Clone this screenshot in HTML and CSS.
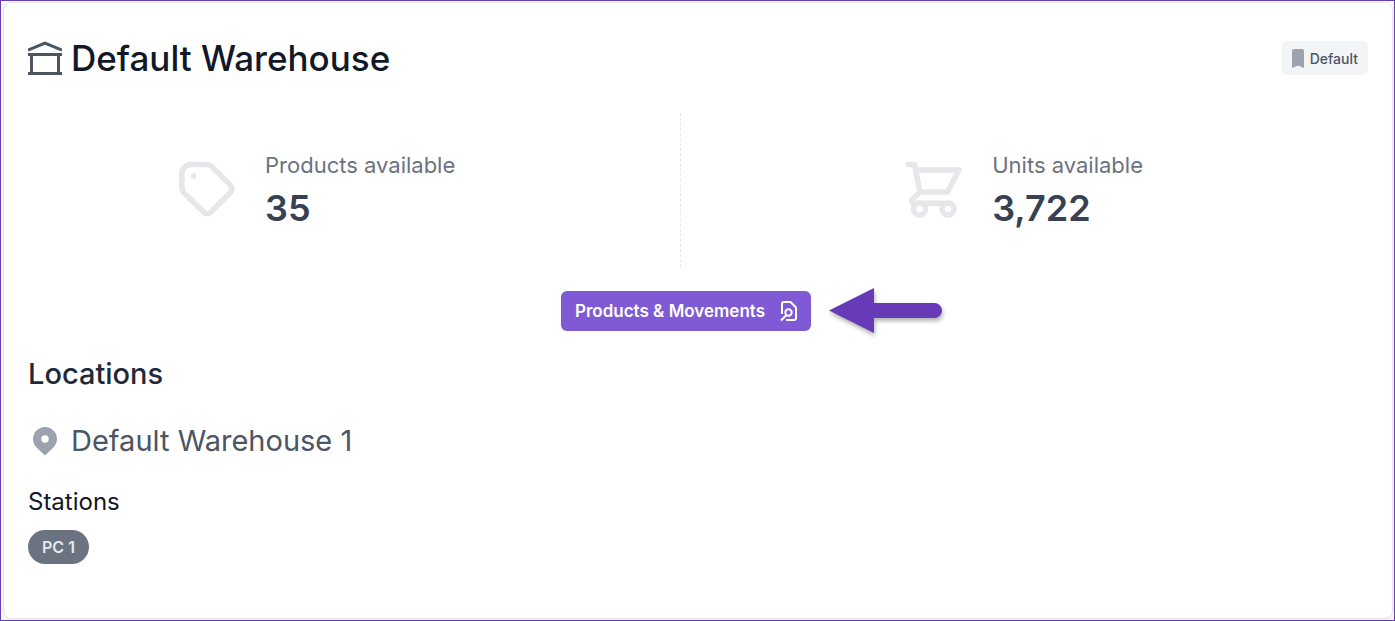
FILE: index.html
```html
<!DOCTYPE html>
<html lang="en">
  <head>
    <meta charset="UTF-8" />
    <meta name="viewport" content="width=device-width, initial-scale=1.0" />
    <title>Default Warehouse</title>
    <link rel="stylesheet" href="styles.css">
  </head>
  <body>
    <main class="card">
      <header class="card-header">
        <h1 class="title">
          <svg class="title-icon" viewBox="0 0 34 34" fill="none" stroke="currentColor" stroke-width="3">
            <path d="M0 9 17 2l17 7M0 13.5h34M0 32.5h34M3.5 13.5v19M30.5 13.5v19" />
          </svg>
          Default Warehouse
        </h1>
        <span class="badge">
          <svg class="badge-icon" viewBox="0 0 12 19" fill="currentColor">
            <path d="M0 2a2 2 0 0 1 2-2h8a2 2 0 0 1 2 2v17l-6-2.600L0 19z" />
          </svg>
          Default
        </span>
      </header>

      <section class="stats">
        <div class="stat">
          <svg class="stat-icon" viewBox="0 0 58 58" fill="none" stroke="currentColor" stroke-width="5.500" stroke-linejoin="round">
            <path d="M13 4.500h15.500a8 8 0 0 1 5.600 2.300l18.500 18.600a5 5 0 0 1 0 7.100L32.800 52.300a5 5 0 0 1-7.100 0L6.200 33a8 8 0 0 1-2.300-5.600V13.500a9 9 0 0 1 9.100-9z" />
            <circle cx="15.500" cy="16" r="2.700" fill="currentColor" stroke="none" />
          </svg>
          <div>
            <div class="stat-label">Products available</div>
            <div class="stat-value">35</div>
          </div>
        </div>
        <div class="divider"></div>
        <div class="stat">
          <svg class="stat-icon" viewBox="0 0 58 58" fill="none" stroke="currentColor" stroke-width="5.500" stroke-linecap="round" stroke-linejoin="round">
            <path d="M3.500 4.500h6L15 32M11 10h43L42.500 32H15l-7 6.500c-2 2-1 4.700 2 4.700h35" />
            <circle cx="14.500" cy="49" r="6" />
            <circle cx="43" cy="49" r="6" />
          </svg>
          <div>
            <div class="stat-label">Units available</div>
            <div class="stat-value">3,722</div>
          </div>
        </div>
      </section>

      <div class="actions">
        <button class="btn" type="button">
          Products &amp; Movements
          <svg class="btn-icon" viewBox="0 0 20 22" fill="none" stroke="currentColor" stroke-width="2" stroke-linejoin="round">
            <path d="M3 14V4a2 2 0 0 1 2-2h6.500L17 7.500V18a2 2 0 0 1-2 2H7M2 20.500l5-5" />
            <circle cx="9.500" cy="12.500" r="3.200" />
          </svg>
        </button>
        <svg class="pointer" viewBox="0 0 114 46" fill="currentColor">
          <path d="M0 22.500 45 0v15h60.500a7.500 7.500 0 0 1 0 15H45v15z" />
        </svg>
      </div>

      <section class="locations">
        <h2 class="section-title">Locations</h2>
        <h3 class="location">
          <svg class="location-icon" viewBox="0 0 24 29" fill="currentColor">
            <path fill-rule="evenodd" d="M12 0a12 12 0 0 0-12 12c0 3.500 1.500 6.300 3.800 8.700L12 28.500l8.200-7.800C22.500 18.300 24 15.500 24 12A12 12 0 0 0 12 0zm0 8.300a3.700 3.700 0 1 1 0 7.400 3.700 3.700 0 0 1 0-7.400z" />
          </svg>
          Default Warehouse 1
        </h3>
        <h4 class="stations-title">Stations</h4>
        <span class="station">PC 1</span>
      </section>
    </main>
  </body>
</html>
```

FILE: styles.css
```css
* {
  box-sizing: border-box;
}

body {
  margin: 0;
  min-height: 100vh;
  padding: 1px 1px 1px 2px;
  display: flex;
  background: #fff;
  border: 1px solid #673ab7;
  font-family: "Inter", sans-serif;
  color: #111827;
}

h1,
h2,
h3,
h4 {
  margin: 0;
}

.card {
  flex: 1;
  padding: 31px 24px 24px;
  background: #fff;
  border: 1px solid #e5e7eb;
  border-radius: 8px;
  box-shadow: 0 1px 3px rgba(0, 0, 0, 0.1);
}

.card-header {
  display: flex;
  align-items: center;
  justify-content: space-between;
}

.title {
  display: flex;
  align-items: center;
  gap: 9px;
  font-size: 35px;
  font-weight: 500;
  line-height: 48px;
}

.title-icon {
  width: 34px;
  height: 34px;
  color: #4b5563;
}

.badge {
  display: flex;
  align-items: center;
  gap: 6px;
  height: 34px;
  padding: 0 10px;
  border-radius: 5px;
  background: #f3f4f6;
  color: #4b5563;
  font-size: 14px;
  font-weight: 500;
}

.badge-icon {
  width: 12px;
  height: 19px;
  color: #9ca3af;
}

.stats {
  display: flex;
  justify-content: space-between;
  margin-top: 31px;
  padding: 0 225px 0 150px;
}

.stat {
  display: flex;
  align-items: center;
  gap: 29px;
  padding-bottom: 2px;
}

.stat-icon {
  width: 58px;
  height: 58px;
  color: #e5e7eb;
}

.stat-label {
  color: #6b7280;
  font-size: 22px;
  line-height: 38px;
}

.stat-value {
  color: #374151;
  font-size: 36px;
  font-weight: 600;
  line-height: 48px;
}

.divider {
  height: 154px;
  border-left: 1px dashed #e5e7eb;
}

/* arrow hangs off the right side of the centered button */
.actions {
  display: grid;
  grid-template-columns: 1fr auto 1fr;
  align-items: center;
  column-gap: 18px;
  margin-top: 21px;
  padding-right: 24px;
}

.btn {
  grid-column: 2;
  display: flex;
  align-items: center;
  gap: 14px;
  height: 40px;
  padding: 0 12px 0 14px;
  border: none;
  border-radius: 6px;
  background: #805ad5;
  color: #fff;
  font-family: inherit;
  font-size: 17px;
  font-weight: 600;
  cursor: pointer;
}

.btn:hover {
  background: #6b46c1;
}

.btn-icon {
  width: 20px;
  height: 22px;
}

.pointer {
  width: 114px;
  height: 46px;
  color: #673ab7;
  filter: drop-shadow(1px 3px 2px rgba(0, 0, 0, 0.3));
}

.section-title {
  margin-top: 20px;
  color: #1f2937;
  font-size: 29px;
  font-weight: 500;
  line-height: 40px;
}

.location {
  display: flex;
  align-items: center;
  gap: 14px;
  margin-top: 27px;
  padding-left: 5px;
  color: #4b5563;
  font-size: 29px;
  font-weight: 400;
  line-height: 40px;
}

.location-icon {
  width: 24px;
  height: 29px;
  color: #9ca3af;
}

.stations-title {
  margin-top: 25px;
  font-size: 24px;
  font-weight: 400;
  line-height: 32px;
}

.station {
  display: inline-block;
  margin-top: 12px;
  padding: 0 14px;
  border-radius: 17px;
  background: #6b7280;
  color: #e5e7eb;
  font-size: 16px;
  font-weight: 600;
  line-height: 34px;
}
```
